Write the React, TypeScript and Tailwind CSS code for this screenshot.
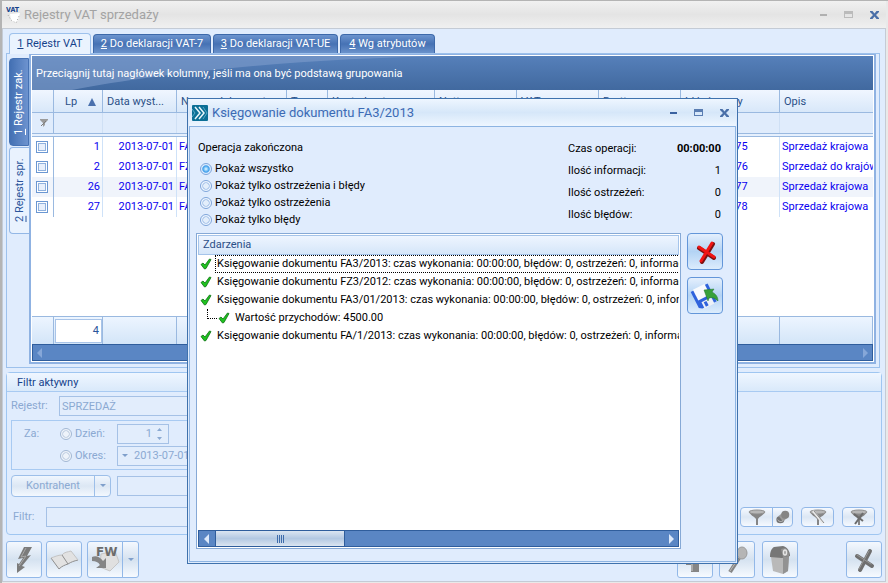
import type { ReactNode } from "react";

const COLUMNS = [
  { label: "", width: 22 },
  { label: "Lp", width: 49 },
  { label: "Data wyst...", width: 74 },
  { label: "Numer dokumentu", width: 110 },
  { label: "Typ", width: 41 },
  { label: "Kontrahent", width: 107 },
  { label: "Netto", width: 82 },
  { label: "VAT", width: 82 },
  { label: "Brutto", width: 82 },
  { label: "Id księgowy", width: 99 },
  { label: "Opis", width: 0 },
];

const ROWS = [
  { lp: 1, date: "2013-07-01", doc: "FA3/2013", id: "FA3/2013/75", desc: "Sprzedaż krajowa" },
  { lp: 2, date: "2013-07-01", doc: "FZ3/2012", id: "FZ3/2012/76", desc: "Sprzedaż do krajów UE" },
  { lp: 26, date: "2013-07-01", doc: "FA3/01/2013", id: "FA3/2013/77", desc: "Sprzedaż krajowa" },
  { lp: 27, date: "2013-07-01", doc: "FA/1/2013", id: "FA1/2013/78", desc: "Sprzedaż krajowa" },
];

const EVENTS = [
  { text: "Księgowanie dokumentu FA3/2013: czas wykonania: 00:00:00, błędów: 0, ostrzeżeń: 0, informacji: 0", selected: true },
  { text: "Księgowanie dokumentu FZ3/2012: czas wykonania: 00:00:00, błędów: 0, ostrzeżeń: 0, informacji: 0" },
  { text: "Księgowanie dokumentu FA3/01/2013: czas wykonania: 00:00:00, błędów: 0, ostrzeżeń: 0, informacji: 1" },
  { text: "Wartość przychodów: 4500.00", child: true },
  { text: "Księgowanie dokumentu FA/1/2013: czas wykonania: 00:00:00, błędów: 0, ostrzeżeń: 0, informacji: 0" },
];

const STATS = [
  { label: "Czas operacji:", value: "00:00:00", bold: true },
  { label: "Ilość informacji:", value: "1" },
  { label: "Ilość ostrzeżeń:", value: "0" },
  { label: "Ilość błędów:", value: "0" },
];

const SHOW_OPTIONS = [
  "Pokaż wszystko",
  "Pokaż tylko ostrzeżenia i błędy",
  "Pokaż tylko ostrzeżenia",
  "Pokaż tylko błędy",
];

export default function App() {
  return (
    <div className="relative flex min-h-screen flex-col overflow-hidden border-l-2 border-t border-[#b4b4b4] bg-[#e9e9e9] pb-px pr-0.5 font-['Roboto','Noto_Sans',sans-serif] text-[11px] leading-4 text-[#2b559b]">
      <TitleBar />
      <main className="flex flex-1 flex-col border border-[#c4cbd5] bg-[#e0ecfd] px-[3px] pb-[3px] pt-1">
        <RegisterTabs />
        <section className="mr-0.5 flex flex-1 border border-[#9dc1ec] bg-[#e0ecfd] pb-[3px] pl-0.5 pr-[3px]">
          <SideTabs />
          <RegisterGrid />
        </section>
        <FilterPanel />
        <Toolbar />
      </main>
      <PostingDialog />
    </div>
  );
}

function TitleBar() {
  return (
    <header className="flex h-[27px] items-center bg-linear-to-b from-[#f1f1f1] via-[#e4e4e4] to-[#f0f0f0] pl-1 pr-1.5">
      <VatIcon />
      <h1 className="ml-0.5 flex-1 text-[13px] text-[#a3a3a3]">Rejestry VAT sprzedaży</h1>
      <WindowButtons muted />
    </header>
  );
}

function WindowButtons({ muted = false }: { muted?: boolean }) {
  const tone = muted ? "text-[#b0b0b0]" : "text-[#3a62a0]";
  return (
    <div className={`flex gap-[11px] ${tone}`}>
      <button aria-label="Minimalizuj" className="size-3.5">
        <svg viewBox="0 0 14 14" fill="currentColor" aria-hidden>
          <path d="M4 6h7v2H4z" />
        </svg>
      </button>
      <button aria-label="Maksymalizuj" className="size-3.5">
        <svg viewBox="0 0 14 14" fill="currentColor" aria-hidden>
          <path d="M3 3h9v7H3zM4 6v3h7V6z" fillRule="evenodd" fillOpacity=".8" />
        </svg>
      </button>
      <button aria-label="Zamknij" className="size-3.5 text-[#4a6fa8]">
        <svg viewBox="0 0 14 14" fill="currentColor" aria-hidden>
          <path d="M4 3h2.500l2 2.500L10.500 3H13v1l-3 3 3 3v1h-2.500l-2-2.500L6.500 11H4v-1l3-3-3-3z" />
        </svg>
      </button>
    </div>
  );
}

function RegisterTabs() {
  const tabs = ["Do deklaracji VAT-7", "Do deklaracji VAT-UE", "Wg atrybutów"];
  return (
    <nav className="flex h-5 items-end gap-0.5 pl-[3px]">
      <button className="relative z-10 -mb-px h-[21px] w-[82px] rounded-t border border-b-0 border-[#9dc1ec] bg-[#eaf3fe] whitespace-nowrap text-[#15428b]">
        <u>1</u> Rejestr VAT
      </button>
      {tabs.map((tab, i) => (
        <button
          key={tab}
          className={`h-[19px] whitespace-nowrap rounded-t border border-b-0 border-[#3d69aa] bg-linear-to-b from-[#6c94cf] via-[#4672b4] to-[#6a92cb] text-white ${["w-[118px]", "w-[125px]", "w-[95px]"][i]}`}
        >
          <u>{i + 2}</u> {tab}
        </button>
      ))}
    </nav>
  );
}

function SideTabs() {
  return (
    <nav className="flex w-5 flex-col gap-px pt-1">
      <button className="h-[88px] w-5 rotate-180 whitespace-nowrap rounded-r border border-[#4672b4] bg-linear-to-r from-[#6d93cf] to-[#4370b3] text-white [writing-mode:vertical-rl]">
        <u>1</u> Rejestr zak.
      </button>
      <button className="h-[87px] w-5 rotate-180 whitespace-nowrap rounded-r border border-l-0 border-[#93b7e6] bg-[#e9f2fe] text-[#2b559b] [writing-mode:vertical-rl]">
        <u>2</u> Rejestr spr.
      </button>
    </nav>
  );
}

function GridColumns() {
  return (
    <colgroup>
      {COLUMNS.map((col) => (
        <col key={col.label} style={col.width ? { width: col.width } : undefined} />
      ))}
    </colgroup>
  );
}

function RegisterGrid() {
  return (
    <div className="flex min-w-0 flex-1 flex-col border-2 border-t border-[#8fb2e2] bg-white p-px">
      <div className="relative h-[34px] overflow-hidden bg-linear-to-b from-[#5680ba] to-[#41699f]">
        <svg viewBox="0 0 842 34" preserveAspectRatio="none" className="absolute size-full" aria-hidden>
          <path d="M0 0H420C270 2 130 17 40 34H0z" fill="#7f9dcb" fillOpacity=".6" />
        </svg>
        <p className="relative truncate px-1 pt-2.5 text-white">
          Przeciągnij tutaj nagłówek kolumny, jeśli ma ona być podstawą grupowania
        </p>
      </div>
      <table className="w-full table-fixed border-separate border-spacing-0 text-[#0a00f0]">
        <GridColumns />
        <thead className="text-left text-[#2b4f87]">
          <tr className="h-[23px] bg-linear-to-b from-[#f0f6ff] to-[#d7e7f9]">
            {COLUMNS.map((col) => (
              <th
                key={col.label}
                className="overflow-hidden whitespace-nowrap border-b border-r border-[#9ab9e0] px-1 pb-0 pt-px font-normal last:border-r-0"
              >
                {col.label === "Lp" ? (
                  <span className="flex items-center justify-between pl-[7px] pr-0.5">
                    Lp
                    <svg viewBox="0 0 8 8" className="size-2" fill="#4a70ad" aria-hidden>
                      <path d="M4 0l4 8H0z" />
                    </svg>
                  </span>
                ) : (
                  col.label
                )}
              </th>
            ))}
          </tr>
          <tr className="h-5 bg-[#e0ecfc]">
            {COLUMNS.map((col, i) => (
              <td key={col.label} className="border-r border-[#cfe0f5] p-0 pl-2 first:border-[#9ab9e0] last:border-r-0">
                {i === 0 && <GridFilterIcon />}
              </td>
            ))}
          </tr>
          <tr className="h-1">
            <td colSpan={COLUMNS.length} className="h-1 border-y border-[#9ab9e0] bg-[#e6f0fd] p-0" />
          </tr>
        </thead>
        <tbody>
          {ROWS.map((row) => (
            <tr key={row.lp} className="h-5 nth-3:bg-[#f0f4fb] *:overflow-hidden *:whitespace-nowrap *:border-r *:border-[#cfe2f8] *:py-0">
              <td className="border-[#9ab9e0]! p-0 pl-1">
                <input
                  type="checkbox"
                  aria-label={`Zaznacz pozycję ${row.lp}`}
                  className="block size-3 appearance-none border border-[#6b97d2] bg-[#e8f0fc] shadow-[inset_0_0_0_1px_#fff,inset_0_0_0_2px_#8fb1de]"
                />
              </td>
              <td className="px-0.5 text-right">{row.lp}</td>
              <td className="px-0.5 text-right">{row.date}</td>
              <td className="px-0.5">{row.doc}</td>
              <td />
              <td />
              <td />
              <td />
              <td />
              <td className="px-0.5">{row.id}</td>
              <td className="border-r-0! px-0.5">{row.desc}</td>
            </tr>
          ))}
        </tbody>
      </table>
      <div className="flex-1" />
      <table className="w-full table-fixed border-separate border-spacing-0 border-t border-[#9ab9e0] bg-linear-to-b from-[#edf5ff] to-[#d3e5f8]">
        <GridColumns />
        <tbody>
          <tr className="h-[27px]">
            {COLUMNS.map((col, i) => (
              <td key={col.label} className="border-r border-[#9ab9e0] p-0">
                {i === 1 && (
                  <div className="ml-px flex h-6 items-center justify-end border border-[#a9c4e8] bg-white pr-0.5">4</div>
                )}
              </td>
            ))}
          </tr>
        </tbody>
      </table>
      <div className="flex h-[17px] items-center justify-between border border-[#2f5d9c] bg-[#5a86c4] px-1 text-[#86a7d8]">
        <ArrowLeft />
        <ArrowRight />
      </div>
    </div>
  );
}

const fieldClass = "h-5 border border-[#a5c1e6] bg-[#e2edfc] px-0.5 text-[#8ba9d2]";
const mutedRadioClass =
  "size-3 appearance-none rounded-full border border-[#a3b8d4] bg-[radial-gradient(circle,#eef3fa_35%,#b9c9de_45%,#eef3fa_60%)]";

function FilterPanel() {
  return (
    <section className="mt-1 flex h-[163px] flex-col rounded-sm border border-[#9fc6f1] text-[#8ba9d2]">
      <h2 className="h-[19px] border-b border-[#a8caf2] bg-linear-to-b from-[#eff6ff] to-[#d9e9fa] pl-2.5 pt-0.5 text-[#15428b]">
        Filtr aktywny
      </h2>
      <div className="flex items-center pl-1 pt-1">
        <label htmlFor="register" className="w-12">Rejestr:</label>
        <input id="register" disabled defaultValue="SPRZEDAŻ" className={`${fieldClass} w-100`} />
      </div>
      <div role="group" aria-label="Za" className="ml-1 mt-1 flex h-[50px] w-120 border border-[#a8caf2] pl-3 pt-[3px]">
        <span className="w-9 pt-0.5">Za:</span>
        <div className="flex flex-col gap-0.5">
          <div className="flex h-5 items-center">
            <label className="flex w-[57px] items-center gap-[3px]">
              <input type="radio" name="period" disabled className={mutedRadioClass} />
              Dzień:
            </label>
            <div className={`${fieldClass} flex w-[52px] items-center`}>
              <input aria-label="Liczba dni" disabled defaultValue="1" className="w-9 pr-1 text-right" />
              <svg viewBox="0 0 8 14" className="h-3.5 w-2" fill="currentColor" aria-hidden>
                <path d="M1 4h5L3.500 1zM1 10h5l-2.500 3z" />
              </svg>
            </div>
          </div>
          <div className="flex h-5 items-center">
            <label className="flex w-[57px] items-center gap-[3px]">
              <input type="radio" name="period" disabled className={mutedRadioClass} />
              Okres:
            </label>
            <button disabled className={`${fieldClass} flex w-40 items-center gap-1.5 pl-1`}>
              <ArrowDown />
              2013-07-01
            </button>
          </div>
        </div>
      </div>
      <div className="mt-[5px] flex items-center pl-1">
        <div className="flex h-[22px] w-[100px] rounded-sm border border-[#9dbfe9] bg-linear-to-b from-[#f0f6fe] via-[#dce7f4] to-[#f3f8fe]">
          <button disabled className="w-[83px] border-r border-[#9dbfe9]">Kontrahent</button>
          <button disabled aria-label="Rozwiń" className="flex flex-1 items-center justify-center">
            <ArrowDown />
          </button>
        </div>
        <input aria-label="Kontrahent" disabled className={`${fieldClass} ml-1.5 w-100`} />
      </div>
      <div className="mt-2.5 flex items-center pl-1.5 pr-1.5">
        <label htmlFor="filter" className="w-[33px]">Filtr:</label>
        <input id="filter" disabled className={`${fieldClass} w-120`} />
        <div className="ml-auto flex">
          <SmallButton label="Filtruj" className="w-[33px] rounded-l-sm">
            <FunnelIcon />
          </SmallButton>
          <SmallButton label="Przypnij filtr" className="-ml-px w-[21px] rounded-r-sm">
            <svg viewBox="0 0 18 18" className="size-4" aria-hidden>
              <ellipse cx="6" cy="12" rx="4.500" ry="4" fill="#747474" />
              <path d="M4 8l6-5 5 6-6 5z" fill="#9a9a9a" />
              <circle cx="11.500" cy="6.500" r="4.500" fill="#858585" />
              <path d="M3 12c1 2 4 3 6 1" stroke="#c5c5c5" fill="none" />
            </svg>
          </SmallButton>
          <SmallButton label="Kreator filtra" className="ml-2 w-[33px] rounded-sm">
            <FunnelIcon>
              <path d="M4 3l10 12" stroke="#e9e9e9" strokeWidth="2.500" />
              <path d="M5 3l10 12" stroke="#8a8a8a" />
            </FunnelIcon>
          </SmallButton>
          <SmallButton label="Wyczyść filtr" className="ml-2 w-[33px] rounded-sm">
            <FunnelIcon>
              <path d="M4 6l9 7M13 5l-8 11" stroke="#6c6c6c" strokeWidth="2" />
            </FunnelIcon>
          </SmallButton>
        </div>
      </div>
    </section>
  );
}

function SmallButton({ label, className, children }: { label: string; className: string; children: ReactNode }) {
  return (
    <button
      aria-label={label}
      className={`flex h-5 items-center justify-center border border-[#92b8e8] bg-linear-to-b from-[#f5f9ff] via-[#dce7f4] to-[#f5f9ff] ${className}`}
    >
      {children}
    </button>
  );
}

function ToolButton({ label, className = "", children }: { label: string; className?: string; children: ReactNode }) {
  return (
    <button
      aria-label={label}
      className={`flex h-[37px] items-center justify-center rounded-[3px] border border-[#92b8e8] bg-linear-to-b from-[#f4f8fe] via-[#d5e2f0] to-[#f6faff] ${className}`}
    >
      {children}
    </button>
  );
}

function Toolbar() {
  return (
    <div className="mt-1.5 flex">
      <ToolButton label="Wykonaj" className="w-9">
        <svg viewBox="0 0 32 32" className="size-8" aria-hidden>
          <path d="M16 3h8l-5 9 4-1-9 11 3 1-8 6 0-10 2 1 4-6-5 1z" fill="#7b7b7b" />
          <path d="M18 4l-5 9 5-1-7 10" stroke="#a9a9a9" fill="none" />
        </svg>
      </ToolButton>
      <ToolButton label="Księga" className="ml-1 w-9">
        <svg viewBox="0 0 32 32" className="size-8" aria-hidden>
          <path d="M3 14c3-1 7-3 11-3 2-3 6-3 9-4l7 9c-4 1-7 2-10 4-3 1-6 2-9 5z" fill="#e2e2e2" />
          <path d="M14 11l6 9M3 14l8 11c3-3 6-4 9-5 3-2 6-3 10-4" stroke="#8f8f8f" fill="none" />
          <path d="M3 14c3-1 7-3 11-3 2-3 6-3 9-4l7 9" stroke="#c4c4c4" fill="none" />
        </svg>
      </ToolButton>
      <div className="ml-[5px] flex">
        <ToolButton label="Księguj do FW" className="w-9 rounded-r-none">
          <svg viewBox="0 0 32 34" className="h-[34px] w-8" aria-hidden>
            <path d="M12 11l14-3 4 11-9 9-10-4z" fill="#e0e0e0" stroke="#c6c6c6" />
            <path d="M3 14c4-2 8 0 11 4l3-3v10H7l4-3c-2-3-4-4-8-4z" fill="#858585" />
            <text x="7" y="13" fontSize="12" fontWeight="bold" fontFamily="DejaVu Sans" fill="#6c6c6c">FW</text>
          </svg>
        </ToolButton>
        <ToolButton label="Więcej" className="-ml-px w-[17px] rounded-l-none">
          <ArrowDown />
        </ToolButton>
      </div>
      <ToolButton label="Dodaj" className="ml-auto w-9">
        <svg viewBox="0 0 32 32" className="size-8" aria-hidden>
          <path d="M12 4h8v8h7v8h-7v8h-8v-7H7v-9h5z" fill="#858585" />
          <path d="M13 20v7" stroke="#aaa" strokeWidth="2" />
        </svg>
      </ToolButton>
      <ToolButton label="Szukaj" className="ml-1.5 w-9">
        <svg viewBox="0 0 32 32" className="size-8" aria-hidden>
          <path d="M9 28l9-14" stroke="#858585" strokeWidth="4" />
          <path d="M9 27l8-12" stroke="#bbb" />
          <ellipse cx="21" cy="9" rx="5" ry="6" fill="#b5b5b5" stroke="#9a9a9a" />
        </svg>
      </ToolButton>
      <ToolButton label="Usuń" className="ml-[7px] w-9">
        <svg viewBox="0 0 32 32" className="size-8" aria-hidden>
          <path d="M7 13l2 14 10 3 5-3 1-15z" fill="#b9b9b9" />
          <path d="M19 14v16l5-3 1-15z" fill="#929292" />
          <path d="M6 13c0-5 1-8 4-10l9-1c4 1 7 5 7 10l-8 2z" fill="#777" />
          <path d="M17 5l4-1c3 1 4 5 4 8l-6 1z" fill="#929292" />
          <ellipse cx="21" cy="8.500" rx="1.500" ry="2.500" fill="none" stroke="#e5e5e5" strokeWidth="1.500" />
        </svg>
      </ToolButton>
      <ToolButton label="Zamknij" className="ml-12 w-9">
        <svg viewBox="0 0 32 32" className="size-8" aria-hidden>
          <path d="M9 12l15 10M22 7L12 26" stroke="#6f6f6f" strokeWidth="4" strokeLinecap="round" />
          <path d="M9 11l14 9M21 7L11 25" stroke="#979797" strokeLinecap="round" />
        </svg>
      </ToolButton>
    </div>
  );
}

function PostingDialog() {
  return (
    <div
      role="dialog"
      aria-labelledby="dialog-title"
      className="absolute left-[185px] top-[97px] flex h-[466px] w-[551px] flex-col border border-[#3f72ad] bg-[#dfebfc] px-px pb-px text-black"
    >
      <div className="flex h-[27px] items-center bg-linear-to-b from-[#eef6ff] via-[#d6e7f9] to-[#eef6ff] pl-[3px] pr-1.5">
        <svg viewBox="0 0 16 16" className="size-4" aria-hidden>
          <rect width="16" height="16" rx="1" fill="#0b6f96" />
          <path d="M3 2l5 6-5 6M7 2l5 6-5 6" fill="none" stroke="#e8f6fa" strokeWidth="1.500" />
          <path d="M0 4l3 4-3 4M11 2l4 6-4 6" fill="none" stroke="#58a9c4" />
        </svg>
        <h2 id="dialog-title" className="ml-1 flex-1 text-[13px] text-[#3c6bb5]">
          Księgowanie dokumentu FA3/2013
        </h2>
        <WindowButtons />
      </div>
      <div className="flex flex-1 flex-col border border-[#8db4e2] bg-[#e0ecfd] pb-3 pl-1.5 pr-3 pt-[11px]">
        <div className="flex justify-between px-0.5">
          <fieldset>
            <legend className="h-[22px] pt-0.5">Operacja zakończona</legend>
            {SHOW_OPTIONS.map((option, i) => (
              <label key={option} className="flex h-[17px] items-center gap-[3px] pl-0.5">
                <input
                  type="radio"
                  name="show"
                  defaultChecked={i === 0}
                  className="size-3 appearance-none rounded-full border border-[#7fa5da] bg-[radial-gradient(circle,#e3eefb_35%,#9dbce6_45%,#edf5ff_60%)] checked:bg-[radial-gradient(circle,#bfe8ff_10%,#3b9bea_45%,#dcecff_60%)]"
                />
                {option}
              </label>
            ))}
          </fieldset>
          <dl className="w-[153px]">
            {STATS.map((stat) => (
              <div key={stat.label} className="flex h-[22px] items-center justify-between">
                <dt>{stat.label}</dt>
                <dd className={stat.bold ? "font-bold" : ""}>{stat.value}</dd>
              </div>
            ))}
          </dl>
        </div>
        <div className="mt-[5px] flex min-h-0 flex-1 gap-1.5">
          <EventList />
          <div className="flex flex-col gap-[7px]">
            <DialogButton label="Anuluj">
              <svg viewBox="0 0 32 32" className="size-8" aria-hidden>
                <path d="M10 12l15 10M24 8L13 26" stroke="#7a1010" strokeWidth="4" strokeLinecap="round" />
                <path d="M10 11l15 10M23 7L12 25" stroke="#f01414" strokeWidth="3" strokeLinecap="round" />
              </svg>
            </DialogButton>
            <DialogButton label="Zapisz">
              <svg viewBox="0 0 32 32" className="size-8" aria-hidden>
                <g transform="rotate(-27 16 16)">
                  <path d="M5 6h19v20H8l-3-2z" fill="#2f63dc" />
                  <path d="M8 5h13v12H8z" fill="#f8fafd" />
                  <path d="M10 20h11v7H10z" fill="#edf1f8" />
                  <path d="M12 21h3v5h-3z" fill="#2f63dc" />
                </g>
                <path d="M15 10l10-1-2 3c4 2 6 5 6 9-3-3-6-4-9-3l-1 3z" fill="#37a13b" stroke="#23742a" strokeWidth=".5" />
              </svg>
            </DialogButton>
          </div>
        </div>
      </div>
    </div>
  );
}

function DialogButton({ label, children }: { label: string; children: ReactNode }) {
  return (
    <button
      aria-label={label}
      className="flex h-[37px] w-9 items-center justify-center rounded-sm border border-[#6396d9] bg-linear-to-b from-[#e4effd] via-[#b3d3f4] to-[#dcecfd]"
    >
      {children}
    </button>
  );
}

function EventList() {
  return (
    <div className="flex min-w-0 flex-1 flex-col border border-[#86a9d6] bg-white p-px">
      <h3 className="h-5 border border-[#a5c4ea] bg-linear-to-b from-[#eef5ff] to-[#d5e6f9] pl-1 pt-px text-[#2b4f87]">
        Zdarzenia
      </h3>
      <ul className="flex-1 overflow-hidden">
        {EVENTS.map((event) => (
          <li key={event.text} className={`flex h-[18px] items-center whitespace-nowrap ${event.child ? "pl-[9px]" : "pl-0.5"}`}>
            {event.child && <span className="-mt-2 mr-px h-2.5 w-2.5 border-b border-l border-dotted border-black" />}
            <CheckIcon />
            <span className={event.selected ? "ml-[3px] h-full border border-dotted border-black pl-px" : "ml-[5px]"}>
              {event.text}
            </span>
          </li>
        ))}
      </ul>
      <div className="flex h-[17px] items-center border border-[#2f5d9c] bg-[#5a86c4] text-[#dbe8fa]">
        <div className="flex w-4 justify-center">
          <ArrowLeft />
        </div>
        <div className="flex h-full w-[130px] items-center justify-center gap-px border-x border-[#2f5d9c] bg-linear-to-b from-[#dbe5f1] via-[#b3c8e2] to-[#dbe5f1]">
          {[0, 1, 2, 3].map((i) => (
            <i key={i} className="h-2 w-px bg-[#3f6cab]" />
          ))}
        </div>
        <div className="ml-auto pr-1">
          <ArrowRight />
        </div>
      </div>
    </div>
  );
}

function CheckIcon() {
  return (
    <svg viewBox="0 0 12 12" className="size-3 shrink-0" aria-hidden>
      <path d="M1 6.500l2-1.500 2 2 4.500-6 1.500.500L6 10.500l-1.500.500z" fill="#1fc21f" stroke="#0b6e12" strokeWidth=".8" />
    </svg>
  );
}

function FunnelIcon({ children }: { children?: ReactNode }) {
  return (
    <svg viewBox="0 0 18 18" className="size-[18px]" fill="none" aria-hidden>
      <path d="M1 4c2 4 5 4 7 7v6h2v-6c2-3 5-3 7-7z" fill="#858585" />
      <ellipse cx="9" cy="4" rx="8" ry="2" fill="#b7b7b7" stroke="#8e8e8e" />
      {children}
    </svg>
  );
}

function GridFilterIcon() {
  return (
    <svg viewBox="0 0 8 8" className="size-2" fill="#9b9b9b" aria-hidden>
      <path d="M0 0h8v1L5 4v2L3 8V4L0 1z" />
      <path d="M1 7l5-5" stroke="#7c7c7c" />
    </svg>
  );
}

function ArrowLeft() {
  return (
    <svg viewBox="0 0 6 10" className="h-2.5 w-1.5" fill="currentColor" aria-hidden>
      <path d="M5 0v10L0 5z" />
    </svg>
  );
}

function ArrowRight() {
  return (
    <svg viewBox="0 0 6 10" className="h-2.5 w-1.5" fill="currentColor" aria-hidden>
      <path d="M1 0v10l5-5z" />
    </svg>
  );
}

function ArrowDown() {
  return (
    <svg viewBox="0 0 6 4" className="h-1 w-1.5" fill="#7f9fcb" aria-hidden>
      <path d="M0 0h6L3 3z" />
    </svg>
  );
}

function VatIcon() {
  return (
    <svg viewBox="0 0 16 18" className="h-[18px] w-4" aria-hidden>
      <path d="M4 8l10-1-2 7-3 3-4-3z" fill="#fff" />
      <path d="M2 9l3 5 5 3 3-7" fill="none" stroke="#aaa" strokeDasharray="1 2" />
      <text x="0" y="6" fontSize="7" fontWeight="bold" fontFamily="DejaVu Sans Condensed" fill="#15428b">VAT</text>
    </svg>
  );
}
